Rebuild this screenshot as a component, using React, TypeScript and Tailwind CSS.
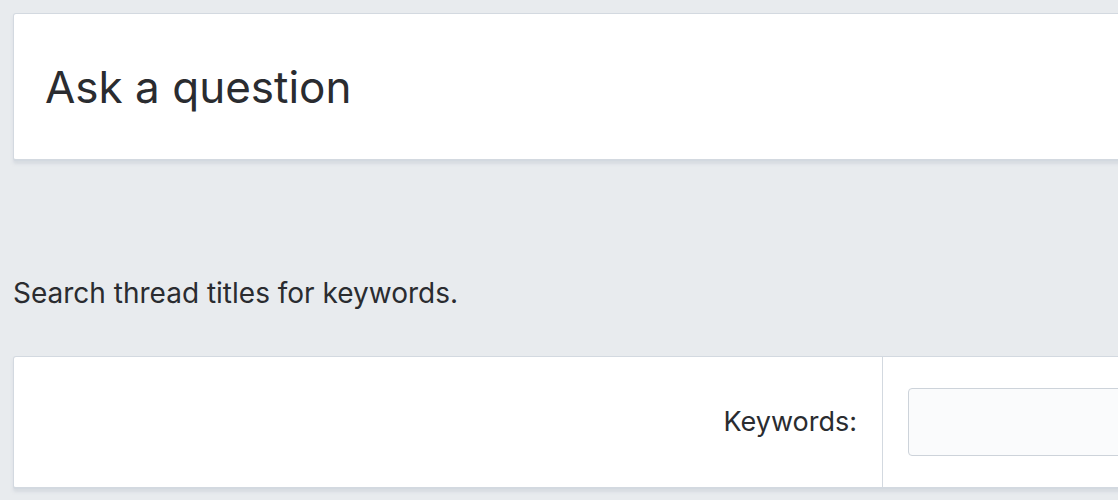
export default function App() {
  return (
    <div
      className="min-h-screen w-full overflow-hidden bg-[#e8ebee] pt-[13px] pl-[13px] text-[#2a2c30]"
      style={{ fontFamily: "Inter, 'Noto Sans', sans-serif" }}
    >
      <div className="-mr-6 flex h-[148px] items-center rounded-[3px] border border-b-2 border-[#d3d9e0] bg-white pl-[31px] shadow-[0_3px_3px_rgba(200,206,214,0.5)]">
        <h1 className="text-[44px] leading-none">Ask a question</h1>
      </div>

      <p className="mt-[114px] text-[28px] leading-[36px]">
        Search thread titles for keywords.
      </p>

      <div className="-mr-6 mt-[45px] flex h-[133px] rounded-[3px] border border-b-2 border-[#d3d9e0] bg-white shadow-[0_3px_3px_rgba(200,206,214,0.5)]">
        <div className="flex w-[869px] shrink-0 items-center justify-end border-r border-[#d3d9e0] pr-[25px]">
          <label className="text-[27px]">Keywords:</label>
        </div>
        <div className="flex flex-1 items-center pl-[25px]">
          <input
            type="text"
            className="h-[68px] w-[400px] rounded-[4px] border border-[#cdd3da] bg-[#fafbfc] outline-none"
          />
        </div>
      </div>
    </div>
  );
}
